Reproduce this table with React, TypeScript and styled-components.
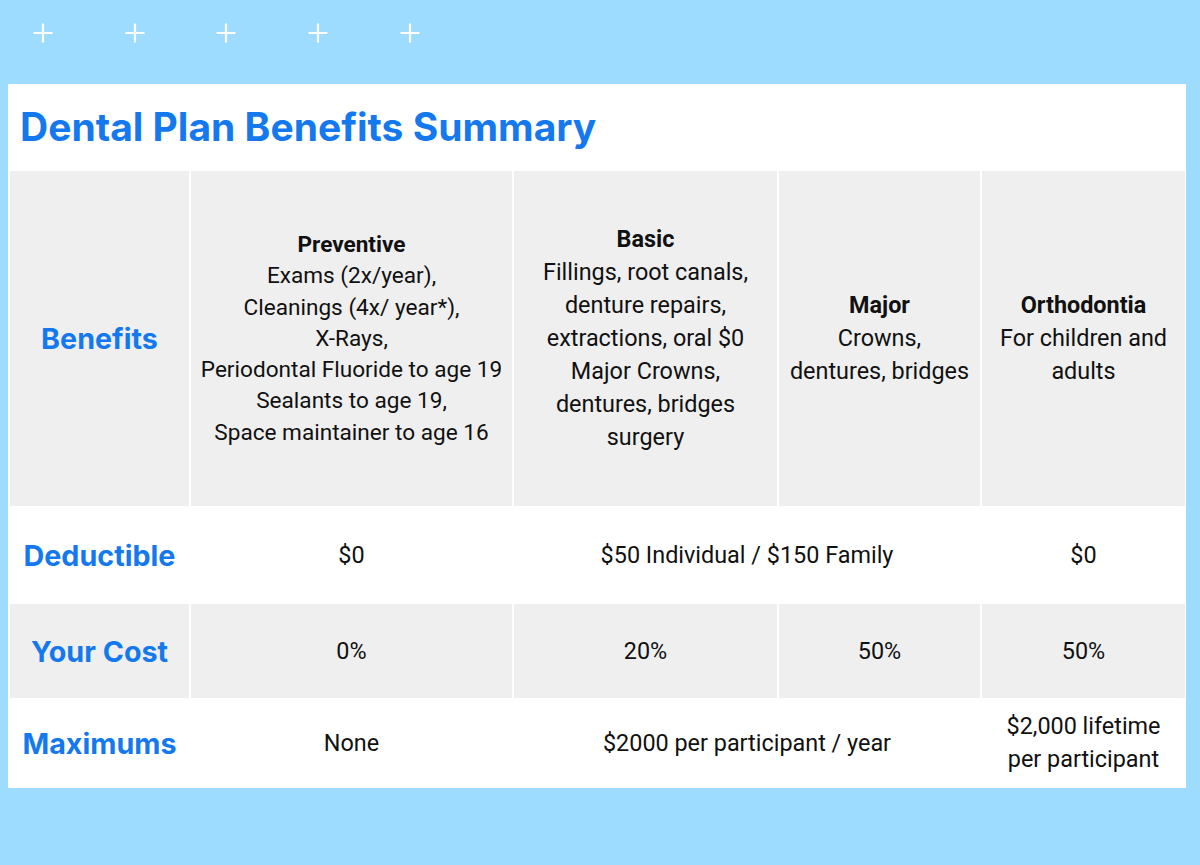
import React from "react";
import styled, { createGlobalStyle } from "styled-components";

const Global = createGlobalStyle`
  html, body { margin: 0; padding: 0; background: #9ddcfe; }
  body { font-family: Roboto, "Liberation Sans", sans-serif; }
`;

const Page = styled.div`
  width: 1200px;
  height: 865px;
  background: #9ddcfe;
  box-sizing: border-box;
  padding: 0 14px 0 8px;
`;

const PlusBar = styled.div`
  height: 84px;
  display: flex;
  align-items: flex-start;
  gap: 71.7px;
  padding: 23px 0 0 25px;
  box-sizing: border-box;
`;

const Plus = styled.svg`
  width: 20px;
  height: 20px;
  flex: none;
`;

const Card = styled.div`
  width: 1178px;
  background: #ffffff;
  box-sizing: border-box;
  padding: 0 1px 0 2px;
`;

const Title = styled.h1`
  margin: 0;
  height: 87px;
  display: flex;
  align-items: center;
  padding: 0 0 2px 10px;
  box-sizing: border-box;
  font-family: Inter, "Liberation Sans", sans-serif;
  font-weight: 700;
  font-size: 39px;
  letter-spacing: 0;
  color: #1479ee;
`;

const Grid = styled.div`
  display: grid;
  grid-template-columns: 179px 321px 263px 201px 203px;
  grid-template-rows: 335px 98px 94px 90px;
  column-gap: 2px;
`;

const Cell = styled.div<{ $shade?: boolean; $span?: number }>`
  background: ${(p) => (p.$shade ? "#efefef" : "#ffffff")};
  grid-column: span ${(p) => p.$span ?? 1};
  display: flex;
  flex-direction: column;
  align-items: center;
  justify-content: center;
  text-align: center;
  font-family: Roboto, "Liberation Sans", sans-serif;
  font-size: 23.4px;
  line-height: 33px;
  color: #111;
`;

const Label = styled.div`
  font-family: Inter, "Liberation Sans", sans-serif;
  font-weight: 700;
  font-size: 28.7px;
  color: #1479ee;
`;

const Head = styled.div`
  font-weight: 700;
`;

const SmallText = styled.div`
  font-size: 22.6px;
  line-height: 31.3px;
  white-space: nowrap;
`;

const PlusIcon = () => (
  <Plus viewBox="0 0 20 20">
    <path d="M10 0.5V19.5M0.5 10H19.5" stroke="#fff" strokeWidth="2.2" />
  </Plus>
);

export default function App() {
  return (
    <Page>
      <Global />
      <PlusBar>
        {[0, 1, 2, 3, 4].map((i) => (
          <PlusIcon key={i} />
        ))}
      </PlusBar>
      <Card>
        <Title>Dental Plan Benefits Summary</Title>
        <Grid>
          <Cell $shade>
            <Label>Benefits</Label>
          </Cell>
          <Cell $shade>
            <SmallText>
              <Head>Preventive</Head>
              Exams (2x/year),
              <br />
              Cleanings (4x/ year*),
              <br />
              X-Rays,
              <br />
              Periodontal Fluoride to age 19
              <br />
              Sealants to age 19,
              <br />
              Space maintainer to age 16
            </SmallText>
          </Cell>
          <Cell $shade>
            <div>
              <Head>Basic</Head>
              Fillings, root canals,
              <br />
              denture repairs,
              <br />
              extractions, oral $0
              <br />
              Major Crowns,
              <br />
              dentures, bridges
              <br />
              surgery
            </div>
          </Cell>
          <Cell $shade>
            <div>
              <Head>Major</Head>
              Crowns,
              <br />
              dentures, bridges
            </div>
          </Cell>
          <Cell $shade>
            <div>
              <Head>Orthodontia</Head>
              For children and
              <br />
              adults
            </div>
          </Cell>

          <Cell>
            <Label>Deductible</Label>
          </Cell>
          <Cell>$0</Cell>
          <Cell $span={2}>$50 Individual / $150 Family</Cell>
          <Cell>$0</Cell>

          <Cell $shade>
            <Label>Your Cost</Label>
          </Cell>
          <Cell $shade>0%</Cell>
          <Cell $shade>20%</Cell>
          <Cell $shade>50%</Cell>
          <Cell $shade>50%</Cell>

          <Cell>
            <Label>Maximums</Label>
          </Cell>
          <Cell>None</Cell>
          <Cell $span={2}>$2000 per participant / year</Cell>
          <Cell>
            <div>
              $2,000 lifetime
              <br />
              per participant
            </div>
          </Cell>
        </Grid>
      </Card>
    </Page>
  );
}
